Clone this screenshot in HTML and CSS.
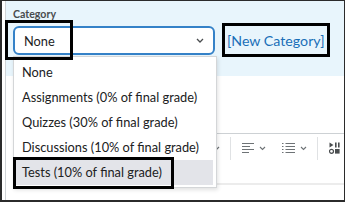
FILE: index.html
```html
<!DOCTYPE html>
<html lang="en">
<head>
    <meta charset="UTF-8">
    <title>Category</title>
    <link rel="stylesheet" href="styles.css">
</head>
<body>
    <div class="shot">
        <div class="page">
            <section class="cat-panel">
                <div class="cat-label">Category</div>
                <div class="cat-row">
                    <div class="select">
                        <span>None</span>
                        <svg class="chev" width="8" height="5" viewBox="0 0 8 5"><path d="M1 1l3 3 3-3" fill="none" stroke="#494c4e" stroke-width="1.3"/></svg>
                    </div>
                    <a class="new-cat" href="#">[New Category]</a>
                </div>
            </section>

            <section class="editor-area">
                <div class="editor">
                    <div class="toolbar">
                        <svg class="stub" width="8" height="5" viewBox="0 0 8 5"><path d="M1 1l3 3 3-3" fill="none" stroke="#6e7376" stroke-width="1.2"/></svg>
                        <span class="sep"></span>
                        <span class="tool">
                            <!-- align left -->
                            <svg width="12" height="12" viewBox="0 0 12 12"><g stroke="#6e7376" stroke-width="1.2"><path d="M0 1.5h12M0 4.5h8M0 7.5h12M0 10.5h7"/></g></svg>
                            <svg width="7" height="5" viewBox="0 0 7 5"><path d="M1 1l2.5 2.5L6 1" fill="none" stroke="#6e7376" stroke-width="1.1"/></svg>
                        </span>
                        <span class="tool">
                            <!-- list -->
                            <svg width="13" height="12" viewBox="0 0 13 12"><g stroke="#6e7376" stroke-width="1.2"><path d="M0 1.5h1.5M0 4.5h1.5M0 7.5h1.5M0 10.5h1.5M3.5 1.5h9.5M3.5 4.5h9.5M3.5 7.5h9.5M3.5 10.5h9.5"/></g></svg>
                            <svg width="7" height="5" viewBox="0 0 7 5"><path d="M1 1l2.5 2.5L6 1" fill="none" stroke="#6e7376" stroke-width="1.1"/></svg>
                        </span>
                        <span class="sep"></span>
                        <span class="tool">
                            <!-- media -->
                            <svg width="11" height="12" viewBox="0 0 11 12"><g fill="#494c4e"><path d="M0.5 0.5v5l4-2.5z"/><rect x="6" y="0.5" width="1.6" height="5"/><rect x="9" y="0.5" width="1.6" height="5"/><rect x="6" y="7" width="4.6" height="4.6"/></g><circle cx="2.5" cy="9.3" r="2" fill="none" stroke="#494c4e" stroke-width="1.2"/></svg>
                        </span>
                    </div>
                    <div class="editor-body"></div>
                </div>
            </section>

            <ul class="dropdown">
                <li>None</li>
                <li>Assignments (0% of final grade)</li>
                <li>Quizzes (30% of final grade)</li>
                <li>Discussions (10% of final grade)</li>
                <li class="active">Tests (10% of final grade)</li>
            </ul>

            <div class="mark mark-none"></div>
            <div class="mark mark-new"></div>
            <div class="mark mark-tests"></div>
        </div>
    </div>
</body>
</html>
```

FILE: styles.css
```css
body {
    margin: 0;
    font-family: Lato, "Noto Sans", sans-serif;
    background: #fff;
}

.shot {
    width: 345px;
    height: 202px;
    box-sizing: border-box;
    border: 1px solid #2b2b2b;
    border-left-width: 2px;
    border-bottom-width: 2px;
    overflow: hidden;
}

.page {
    position: relative;
    height: 100%;
    margin-left: 3px;
    border-left: 1px solid #cfd3d6;
}

.cat-panel {
    background: #e8f5fc;
    height: 75px;
    padding: 7px 0 0 7px;
    box-sizing: border-box;
}

.cat-label {
    font-size: 10.6px;
    font-weight: bold;
    color: #494c4e;
    line-height: 12px;
    margin-bottom: 6px;
}

.cat-row {
    display: flex;
    align-items: center;
}

.select {
    width: 202px;
    height: 29px;
    box-sizing: border-box;
    border: 2px solid #3582c8;
    border-radius: 6px;
    background: #fff;
    display: flex;
    align-items: center;
    justify-content: space-between;
    padding: 0 9px 0 9px;
    font-size: 12.8px;
    color: #202122;
}

.new-cat {
    margin-left: 12px;
    font-size: 14.2px;
    color: #1a6fb8;
    text-decoration: none;
}

.editor-area {
    padding: 57px 0 0 8px;
}

.editor {
    width: 360px;
    border-left: 1px solid #dcdfe2;
    border-top: 1px solid #cdd1d4;
}

.toolbar {
    display: flex;
    align-items: center;
    height: 28px;
}

.stub {
    margin-left: 197px;
}

.sep {
    width: 1px;
    height: 23px;
    background: #e0e2e4;
    margin-left: 10px;
}

.tool {
    display: flex;
    align-items: center;
    gap: 5px;
    margin-left: 12px;
}

.tool + .tool {
    margin-left: 16px;
}

.sep + .tool {
    margin-left: 11px;
}

.sep:nth-of-type(2) {
    margin-left: 11px;
}

.editor-body {
    height: 21px;
    border-bottom: 2px solid #ececec;
}

.dropdown {
    position: absolute;
    left: 7px;
    top: 55px;
    width: 204px;
    height: 132px;
    box-sizing: border-box;
    margin: 0;
    padding: 3px 3px 2px 2px;
    list-style: none;
    background: #fff;
    border: 1px solid #d4d6d8;
    box-shadow: 1px 2px 4px rgba(0, 0, 0, 0.12);
}

.dropdown li {
    height: 25px;
    line-height: 25px;
    padding-left: 6px;
    font-size: 12.8px;
    color: #202122;
    white-space: nowrap;
}

.dropdown li.active {
    background: #e3e4e9;
}

.mark {
    position: absolute;
    border: 3px solid #000;
    box-sizing: border-box;
}

.mark-none {
    left: -1px;
    top: 19px;
    width: 68px;
    height: 40px;
}

.mark-new {
    left: 216px;
    top: 22px;
    width: 108px;
    height: 34px;
}

.mark-tests {
    left: 7px;
    top: 156px;
    width: 161px;
    height: 32px;
}
```
